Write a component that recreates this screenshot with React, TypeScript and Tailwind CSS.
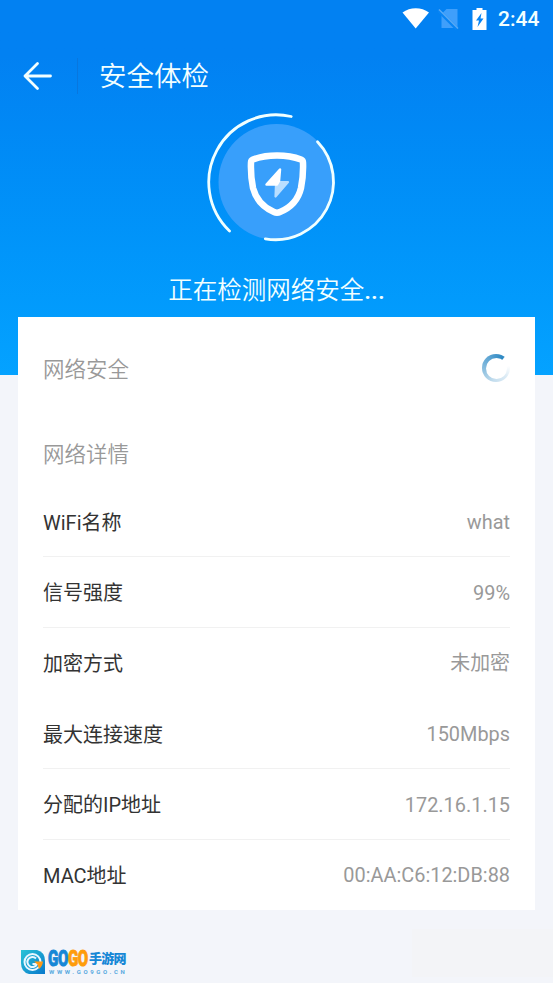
import React from 'react';

interface Detail {
  label: string;
  value: string;
  divider?: boolean;
}

const details: Detail[] = [
  { label: 'WiFi名称', value: 'what', divider: true },
  { label: '信号强度', value: '99%', divider: true },
  { label: '加密方式', value: '未加密' },
  { label: '最大连接速度', value: '150Mbps', divider: true },
  { label: '分配的IP地址', value: '172.16.1.15', divider: true },
  { label: 'MAC地址', value: '00:AA:C6:12:DB:88' },
];

const StatusBar = () => (
  <div className="flex h-[38px] items-center justify-end pr-3">
    <svg width="28" height="21" viewBox="0 0 28 21" className="mr-[8px] -mt-px">
      <path d="M0.500 4.500C8-1.200 19.500-1.200 27 4.500L13.700 20.500Z" fill="#fff" />
    </svg>
    <svg width="22" height="22" viewBox="0 0 22 22" className="mr-[12px]">
      <path d="M8.500 1H19.500v19H3.500V6Z" fill="#3f9ffb" />
      <path d="M0 2 19 21" stroke="#0784f4" strokeWidth="3.500" />
      <path d="M1 1.500 20 20.500" stroke="#5aaaf5" strokeWidth="1.400" />
    </svg>
    <svg width="15" height="24" viewBox="0 0 15 24" className="mr-[11px] -mt-px">
      <path d="M4.500 1h6v2H14.500v20H0.500V3h4Z" fill="#fff" />
      <path d="M9.500 6 4 13.500h3L5.500 20 11.500 11.500H8.500Z" fill="#0784f4" />
    </svg>
    <span className="w-[43px] whitespace-nowrap text-[21px] font-medium leading-none">2:44</span>
  </div>
);

const ScanBadge = () => (
  <svg width="160" height="150" viewBox="0 0 160 150" className="mx-auto block" fill="none">
    <circle cx="79.5" cy="78" r="58" fill="#389ffb" />
    <g stroke="#f0ffff" strokeWidth="2.8" strokeLinecap="round">
      <path d="M94.200 12.500A67.500 67.500 0 0 0 32.500 127" />
      <path d="M120.500 37.700A58 58 0 0 1 68.300 134.800" />
    </g>
    <path
      d="M80 51.500Q93.500 51.500 104 55.500Q106 56.300 106 58.500Q106.500 72 104 84Q100 101 83 108Q80 109.500 77 108Q60.500 101 56 84Q53.500 72 54 58.500Q54 56.300 56 55.500Q66.500 51.500 80 51.500Z"
      stroke="#fff"
      strokeWidth="6.5"
      strokeLinejoin="round"
    />
    <path d="M81 78H91L78.500 92.500L79 80Z" fill="#b9deff" stroke="#b9deff" strokeWidth="2.200" strokeLinejoin="round" />
    <path d="M83 65.500L82 77L80 80.500H69.500Z" fill="#fff" stroke="#fff" strokeWidth="2.500" strokeLinejoin="round" />
  </svg>
);

const Spinner = () => (
  <div className="flex h-7 w-7 items-center justify-center rounded-full bg-[conic-gradient(from_50deg,#ffffff_0deg,#ffffff_30deg,#dcebf5_80deg,#c5deee_140deg,#97c5e2_200deg,#68abd6_260deg,#2b87c2_345deg,#ffffff_350deg)]">
    <div className="h-[21px] w-[21px] rounded-full bg-white" />
  </div>
);

const SiteLogo = () => (
  <div className="flex items-center">
    <svg width="26" height="26" viewBox="0 0 26 26" className="mr-[2px]">
      <defs>
        <linearGradient id="mark" x1="0" y1="0" x2="1" y2="1">
          <stop offset="0" stopColor="#2ac4d6" />
          <stop offset="1" stopColor="#0878cc" />
        </linearGradient>
      </defs>
      <path d="M1 1H17Q25 3 25 12V25H9Q1 23 1 14Z" fill="url(#mark)" />
      <circle cx="12.500" cy="13" r="8" fill="none" stroke="#e9f7ff" strokeWidth="2" />
      <path d="M16 9.500A5 5 0 1 0 17 15H12.500" fill="none" stroke="#e9f7ff" strokeWidth="2" />
      <path d="M14 12.500H23Q22.500 17 19 20L17.500 15.500Z" fill="#ff9916" />
    </svg>
    <div className="w-[80px]">
      <div className="flex h-[19px] items-center whitespace-nowrap font-bold leading-none">
        <span className="flex w-[41px]">
          <span className="flex origin-left scale-x-[.7] text-[21.5px] font-black leading-[19px] tracking-[-0.5px]">
            <span className="text-[#1687d6] [-webkit-text-stroke:0.9px_#1687d6]">GO</span>
            <span className="text-[#ff9c0b] [-webkit-text-stroke:0.9px_#ff9c0b]">GO</span>
          </span>
        </span>
        <span className="text-[13px] font-black tracking-[-0.7px] text-[#1687d6]">手游网</span>
      </div>
      <div className="mt-px whitespace-nowrap pl-px text-[6px] font-bold leading-[6px] tracking-[2.65px] text-[#58a9df]">
        WWW.GO9GO.CN
      </div>
    </div>
  </div>
);

export default function App() {
  return (
    <div className="flex h-[983px] w-[553px] flex-col overflow-hidden bg-[#f3f5fa] font-[Roboto,'Noto_Sans_CJK_SC',sans-serif]">
      <header className="h-[375px] shrink-0 bg-linear-to-b from-[#0281f2] from-15% to-[#04a2ff] text-[#f2ffff]">
        <StatusBar />
        <div className="flex h-[66px] items-center pt-[9px]">
          <svg width="30" height="30" viewBox="0 0 30 30" className="ml-[23px]" fill="none">
            <path
              d="M27.500 15H2M14.500 2.500 2 15 14.500 27.500"
              stroke="#f2ffff"
              strokeWidth="2.8"
              strokeLinecap="round"
              strokeLinejoin="round"
            />
          </svg>
          <div className="ml-6 h-9 w-px bg-[#0877df]" />
          <h1 className="ml-[21px] pt-[3px] text-[27.500px] font-[350] leading-none">安全体检</h1>
        </div>
        <ScanBadge />
        <p className="mt-[19px] text-center text-[24.5px] font-[350] leading-9">
          正在检测网络安全<span className="font-medium">...</span>
        </p>
      </header>

      <main className="relative mx-[18px] -mt-[58px] h-[593px] shrink-0 bg-white px-[25px]">
        <div className="flex h-[102px] items-center justify-between text-[21.500px] font-[350] text-[#999]">
          <h2 className="pt-1">网络安全</h2>
          <Spinner />
        </div>
        <h2 className="flex h-[67.5px] items-center pt-1 text-[21.500px] font-[350] text-[#999]">网络详情</h2>
        <dl>
          {details.map((item) => (
            <div
              key={item.label}
              className={`flex h-[70.67px] items-center justify-between border-b pt-[3px] text-[20px] ${item.divider ? 'border-[#f1f1f1]' : 'border-transparent'}`}
            >
              <dt className="text-[#333]">{item.label}</dt>
              <dd className="text-[19.9px] text-[#999]">{item.value}</dd>
            </div>
          ))}
        </dl>
      </main>

      <footer className="flex grow items-end justify-between">
        <div className="mb-2 ml-5">
          <SiteLogo />
        </div>
        <div className="mb-[6px] h-[48px] w-[141px] bg-[#f3f4f7]" />
      </footer>
    </div>
  );
}
